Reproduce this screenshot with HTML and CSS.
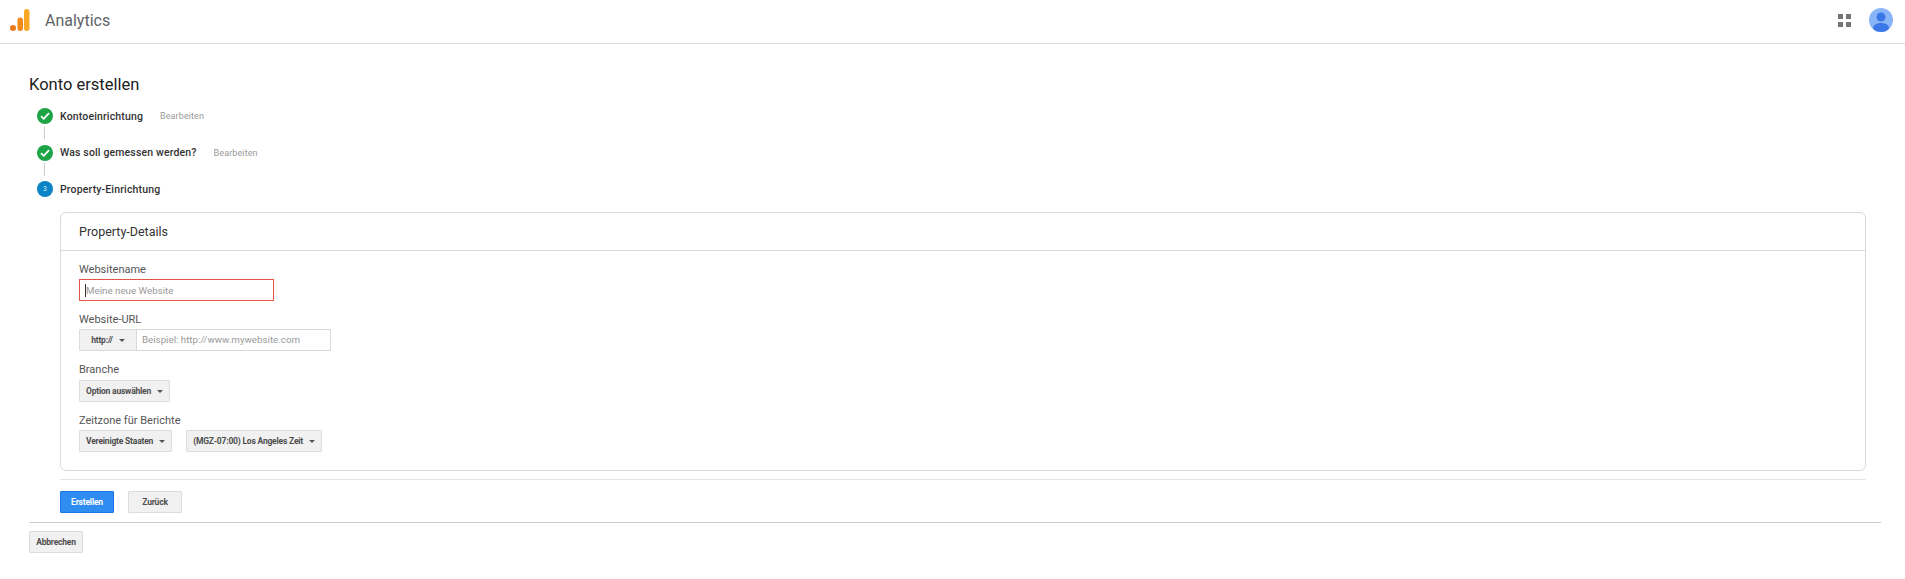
FILE: index.html
```html
<!DOCTYPE html>
<html>
<head>
  <title>Analytics - Konto erstellen</title>
  <meta charset="UTF-8">
  <link rel="stylesheet" href="styles.css">
</head>
<body>
  <header class="topbar">
    <svg class="logo" width="20" height="22" viewBox="0 0 20 22">
      <circle cx="3" cy="19" r="3" fill="#ea7a1c"/>
      <rect x="7.5" y="8.5" width="5.5" height="13.5" rx="2.7" fill="#f08a1d"/>
      <rect x="14" y="0" width="5.5" height="22" rx="2.7" fill="#f9a825"/>
    </svg>
    <span class="product">Analytics</span>
    <div class="topbar-right">
      <svg class="apps" width="13" height="13" viewBox="0 0 13 13" fill="#757575">
        <rect width="5" height="5"/>
        <rect x="8" width="5" height="5"/>
        <rect y="8" width="5" height="5"/>
        <rect x="8" y="8" width="5" height="5"/>
      </svg>
      <svg class="avatar" width="24" height="24" viewBox="0 0 24 24">
        <defs><clipPath id="avatar-clip"><circle cx="12" cy="12" r="12"/></clipPath></defs>
        <circle cx="12" cy="12" r="12" fill="#8ab4f8"/>
        <g clip-path="url(#avatar-clip)" fill="#3b78e7">
          <circle cx="12" cy="9" r="4.5"/>
          <ellipse cx="12" cy="20" rx="8" ry="5"/>
        </g>
      </svg>
    </div>
  </header>

  <main class="page">
    <h1>Konto erstellen</h1>

    <div class="step first">
      <span class="dot done">
        <svg width="10" height="8" viewBox="0 0 10 8"><path d="M1 4.2 3.7 6.8 9 1.2" fill="none" stroke="#fff" stroke-width="1.8"/></svg>
      </span>
      <span class="step-name">Kontoeinrichtung</span>
      <a class="step-edit">Bearbeiten</a>
    </div>
    <div class="step-line"></div>
    <div class="step">
      <span class="dot done">
        <svg width="10" height="8" viewBox="0 0 10 8"><path d="M1 4.2 3.7 6.8 9 1.2" fill="none" stroke="#fff" stroke-width="1.8"/></svg>
      </span>
      <span class="step-name">Was soll gemessen werden?</span>
      <a class="step-edit">Bearbeiten</a>
    </div>
    <div class="step-line"></div>
    <div class="step">
      <span class="dot current">3</span>
      <span class="step-name">Property-Einrichtung</span>
    </div>

    <section class="step-body">
      <div class="card">
        <div class="card-head">Property-Details</div>
        <div class="card-body">
          <div class="field">
            <label>Websitename</label>
            <div class="name-input"><i class="caret"></i>Meine neue Website</div>
          </div>
          <div class="field">
            <label>Website-URL</label>
            <div class="url-group">
              <button class="btn url-btn">http:// <i class="arrow"></i></button>
              <div class="url-input">Beispiel: http://www.mywebsite.com</div>
            </div>
          </div>
          <div class="field">
            <label>Branche</label>
            <button class="btn">Option auswählen <i class="arrow"></i></button>
          </div>
          <div class="field">
            <label>Zeitzone für Berichte</label>
            <div class="tz-row">
              <button class="btn">Vereinigte Staaten <i class="arrow"></i></button>
              <button class="btn">(MGZ-07:00) Los Angeles Zeit <i class="arrow"></i></button>
            </div>
          </div>
        </div>
      </div>
      <div class="actions">
        <button class="btn wide primary">Erstellen</button>
        <button class="btn wide">Zurück</button>
      </div>
    </section>

    <div class="footer-actions">
      <button class="btn wide">Abbrechen</button>
    </div>
  </main>
</body>
</html>
```

FILE: styles.css
```css
body {
  margin: 0;
  font-family: Roboto, "Liberation Sans", sans-serif;
  background: #fff;
  color: #333;
}
.topbar {
  display: flex;
  align-items: center;
  box-sizing: border-box;
  height: 44px;
  padding: 0 10px 3px;
  border-bottom: 1px solid #dadada;
}
.logo {
  margin-right: 15px;
}
.product {
  font-size: 16px;
  color: #5f6368;
}
.topbar-right {
  margin-left: auto;
  display: flex;
  align-items: center;
  gap: 18px;
  padding-right: 2px;
}
.page {
  padding: 0 24px 0 29px;
}
h1 {
  margin: 0;
  padding-top: 29px;
  font-size: 16.5px;
  line-height: 24px;
  font-weight: 400;
  color: #212121;
}
.step {
  display: flex;
  align-items: center;
  height: 20px;
  padding-left: 8px;
}
.first {
  margin-top: 9px;
}
.dot {
  display: flex;
  align-items: center;
  justify-content: center;
  width: 16px;
  height: 16px;
  border-radius: 50%;
  margin-right: 7px;
  font-size: 7px;
  color: #dbeafe;
}
.done {
  background: #1ea446;
}
.current {
  background: #0a84c6;
}
.step-name {
  font-size: 10.5px;
  font-weight: 500;
  letter-spacing: 0.15px;
  color: #333;
}
.step-edit {
  margin-left: 17px;
  font-size: 9px;
  letter-spacing: 0.1px;
  color: #999;
}
.step-line {
  width: 1px;
  height: 13px;
  margin: 0 0 3.5px 15px;
  background: #ccc;
}
.step-body {
  margin: 13px 15px 0 31px;
}
.card {
  border: 1px solid #dadada;
  border-radius: 6px;
}
.card-head {
  height: 37px;
  padding-left: 18px;
  line-height: 37px;
  font-size: 12.5px;
  color: #333;
  border-bottom: 1px solid #dadada;
}
.card-body {
  padding: 11px 18px 18px;
}
.field {
  margin-bottom: 11px;
}
.field:last-child {
  margin-bottom: 0;
}
label {
  display: block;
  height: 12px;
  margin-bottom: 5px;
  line-height: 15px;
  font-size: 11px;
  color: #555;
}
.name-input {
  display: flex;
  align-items: center;
  box-sizing: border-box;
  width: 195px;
  height: 22px;
  padding-left: 5px;
  font-size: 9.75px;
  color: #999;
  border: 1px solid #e25444;
}
.caret {
  width: 1px;
  height: 13px;
  background: #333;
}
.url-group {
  display: flex;
}
.url-btn {
  width: 58px;
  justify-content: center;
  padding: 0;
}
.url-input {
  box-sizing: border-box;
  width: 195px;
  height: 22px;
  margin-left: -1px;
  padding-left: 5px;
  line-height: 20px;
  font-size: 9.75px;
  color: #999;
  border: 1px solid #d9d9d9;
}
.tz-row {
  display: flex;
  gap: 14px;
}
.btn {
  display: inline-flex;
  align-items: center;
  box-sizing: border-box;
  height: 22px;
  padding: 0 6px;
  font-family: inherit;
  font-size: 8.5px;
  font-weight: 700;
  letter-spacing: -0.2px;
  color: #4d4d4d;
  background: #f1f1f1;
  border: 1px solid #dcdcdc;
  border-radius: 1px;
}
.arrow {
  width: 0;
  height: 0;
  margin-left: 6px;
  border-left: 3px solid transparent;
  border-right: 3px solid transparent;
  border-top: 3px solid #555;
}
.actions {
  display: flex;
  gap: 14px;
  margin-top: 8px;
  padding-top: 11px;
  border-top: 1px solid #e5e5e5;
}
.wide {
  width: 54px;
  justify-content: center;
  padding: 0;
}
.primary {
  color: #fff;
  background: #2f8cf1;
  border-color: #1a73e8;
}
.footer-actions {
  margin-top: 9px;
  padding-top: 7px;
  border-top: 1px solid #ccc;
}
```
